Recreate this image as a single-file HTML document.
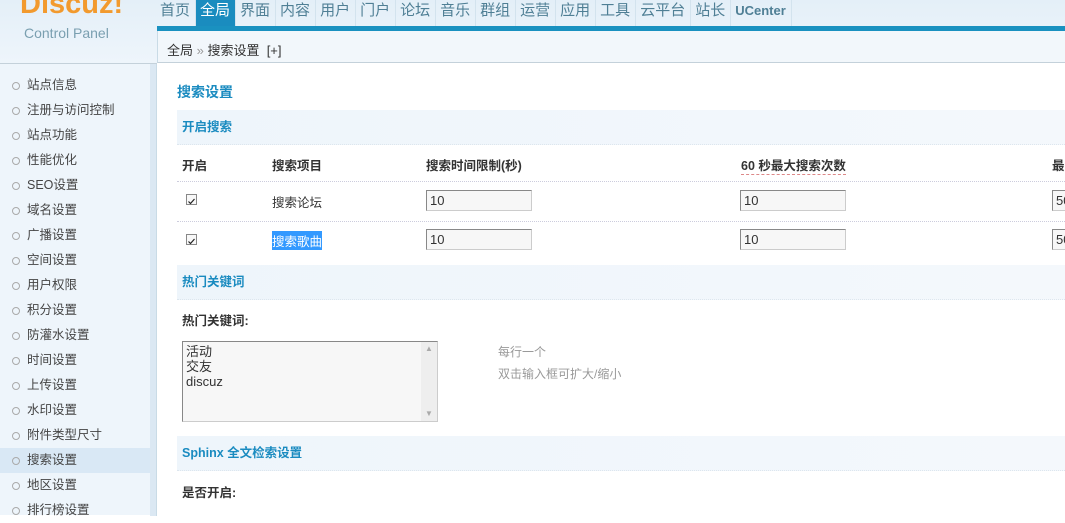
<!DOCTYPE html>
<html><head><meta charset="utf-8"><style>
*{margin:0;padding:0;box-sizing:border-box}
body{width:1065px;height:515px;overflow:hidden;background:#fff;font-family:"Liberation Sans","Noto Sans CJK SC",sans-serif;font-size:12px;color:#333;position:relative}
.a{position:absolute;white-space:nowrap}
#top{position:absolute;left:0;top:0;width:1065px;height:63px;background:linear-gradient(#e4eff8,#eef5fb)}
#navw{position:absolute;left:156px;top:0;display:flex;height:26px}
.nav{height:26px;line-height:22px;font-size:15px;color:#4f7f95;padding:0 5px 0 4px;border-right:1px solid #d3e3ee;white-space:nowrap}
.nav.on{background:#1a8cbf;color:#fff}
#bar{position:absolute;left:157px;top:26px;width:908px;height:5px;background:#1a91c0}
#bc{position:absolute;left:157px;top:31px;width:908px;height:32px;background:#f2f7fb;border-left:1px solid #c9dbe6;border-bottom:1px solid #c4d1da}
#side{position:absolute;left:0;top:63px;width:157px;height:452px;background:#eef5fb;border-top:1px solid #c4d1da}
#side .edge{position:absolute;left:150px;top:0;width:7px;height:452px;background:#dbe8f3;border-right:1px solid #c9dbe6}
.it{position:absolute;left:0;width:150px;height:25px;line-height:25px;padding-left:27px;font-size:12.5px;color:#444}
.it:before{content:"";position:absolute;left:12px;top:9px;width:6px;height:6px;border:1px solid #aaa;border-radius:50%}
.it.on{background:#d9e8f5}
.sec{position:absolute;left:177px;width:888px;height:35px;background:linear-gradient(90deg,#eef5fb,#f4f8fc);border-bottom:1px dotted #dde6ee;color:#1a8bc0;font-weight:bold;font-size:12.5px;line-height:35px;padding-left:5px}
.b{font-weight:bold;color:#333;font-size:12.5px}
.dl{position:absolute;left:177px;width:888px;border-top:1px dotted #ccd;}
.in{position:absolute;width:106px;height:21px;border:1px solid #888;border-right-color:#ccc;border-bottom-color:#ccc;background:#f7f7f7;font-size:13px;line-height:19px;padding-left:3px}
.cb{position:absolute;width:11px;height:11px;border:1px solid #888;background:#f8f8f8}
</style></head><body>
<div id="top"></div>
<div class="a" style="left:20px;top:-12px;font-size:29px;font-weight:bold;color:#f29a2e">Discuz!</div>
<div class="a" style="left:24px;top:25px;font-size:14px;color:#7a9fb0">Control Panel</div>
<div id="navw">
<div class="nav">首页</div><div class="nav on">全局</div><div class="nav">界面</div><div class="nav">内容</div><div class="nav">用户</div><div class="nav">门户</div><div class="nav">论坛</div><div class="nav">音乐</div><div class="nav">群组</div><div class="nav">运营</div><div class="nav">应用</div><div class="nav">工具</div><div class="nav">云平台</div><div class="nav">站长</div><div class="nav" style="font-size:13px;font-weight:bold">UCenter</div>
</div>
<div id="bar"></div>
<div id="bc"></div>
<div class="a" style="left:167px;top:40px;font-size:13px;color:#333">全局 <span style="color:#999">»</span> 搜索设置 &nbsp;[+]</div>
<div id="side"><div class="edge"></div>
<div class="it" style="top:9px">站点信息</div>
<div class="it" style="top:34px">注册与访问控制</div>
<div class="it" style="top:59px">站点功能</div>
<div class="it" style="top:84px">性能优化</div>
<div class="it" style="top:109px">SEO设置</div>
<div class="it" style="top:134px">域名设置</div>
<div class="it" style="top:159px">广播设置</div>
<div class="it" style="top:184px">空间设置</div>
<div class="it" style="top:209px">用户权限</div>
<div class="it" style="top:234px">积分设置</div>
<div class="it" style="top:259px">防灌水设置</div>
<div class="it" style="top:284px">时间设置</div>
<div class="it" style="top:309px">上传设置</div>
<div class="it" style="top:334px">水印设置</div>
<div class="it" style="top:359px">附件类型尺寸</div>
<div class="it on" style="top:384px">搜索设置</div>
<div class="it" style="top:409px">地区设置</div>
<div class="it" style="top:434px">排行榜设置</div>
</div>
<div class="a" style="left:177px;top:82px;font-size:14px;font-weight:bold;color:#1a8bc0">搜索设置</div>
<div class="sec" style="top:110px">开启搜索</div>
<div class="a b" style="left:182px;top:155px">开启</div>
<div class="a b" style="left:272px;top:155px">搜索项目</div>
<div class="a b" style="left:426px;top:155px">搜索时间限制(秒)</div>
<div class="a b" style="left:741px;top:155px;border-bottom:1px dashed #d88">60 秒最大搜索次数</div>
<div class="a b" style="left:1052px;top:155px">最</div>
<div class="dl" style="top:181px"></div>
<div class="cb" style="left:186px;top:194px"><svg width="9" height="9" viewBox="0 0 9 9"><path d="M1.5 4.5L3.5 6.5L7.5 2" stroke="#222" stroke-width="1.2" fill="none"/></svg></div>
<div class="a" style="left:272px;top:192px;font-size:12.5px">搜索论坛</div>
<div class="in" style="left:426px;top:190px">10</div>
<div class="in" style="left:740px;top:190px">10</div>
<div class="in" style="left:1052px;top:190px">50</div>
<div class="dl" style="top:221px"></div>
<div class="cb" style="left:186px;top:234px"><svg width="9" height="9" viewBox="0 0 9 9"><path d="M1.5 4.5L3.5 6.5L7.5 2" stroke="#222" stroke-width="1.2" fill="none"/></svg></div>
<div class="a" style="left:272px;top:231px;font-size:12.5px;background:#3399ff;color:#fff">搜索歌曲</div>
<div class="in" style="left:426px;top:229px">10</div>
<div class="in" style="left:740px;top:229px">10</div>
<div class="in" style="left:1052px;top:229px">50</div>
<div class="sec" style="top:265px">热门关键词</div>
<div class="a b" style="left:182px;top:310px">热门关键词:</div>
<div class="a" style="left:182px;top:341px;width:256px;height:81px;border:1px solid #888;border-right-color:#ccc;border-bottom-color:#ccc;background:#f7f7f7;font-size:13px;line-height:15px;padding:2px 3px;white-space:normal">活动<br>交友<br>discuz
<div style="position:absolute;right:0;top:0;width:16px;height:79px;background:#eee;color:#aaa;font-size:8px;text-align:center;line-height:14px">▲<div style="position:absolute;bottom:0;width:16px">▼</div></div></div>
<div class="a" style="left:498px;top:343px;color:#999">每行一个</div>
<div class="a" style="left:498px;top:365px;color:#999">双击输入框可扩大/缩小</div>
<div class="sec" style="top:436px">Sphinx 全文检索设置</div>
<div class="a b" style="left:182px;top:482px">是否开启:</div>
</body></html>
